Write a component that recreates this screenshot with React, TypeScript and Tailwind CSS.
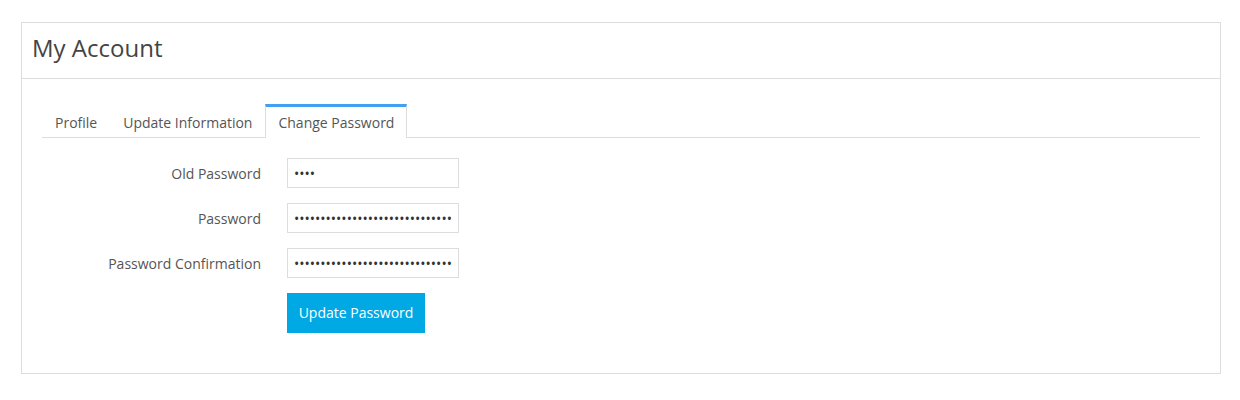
export default function App() {
  const tabs = ["Profile", "Update Information", "Change Password"];
  const active = "Change Password";

  const fields = [
    { label: "Old Password", value: "abcd" },
    { label: "Password", value: "abcdefghijklmnopqrstuvwxyzabcd" },
    { label: "Password Confirmation", value: "abcdefghijklmnopqrstuvwxyzabcd" },
  ];

  return (
    <div className="min-h-[400px] bg-white pl-[21px] pt-[22px] font-['Open_Sans',sans-serif] text-[#555]">
      <div className="h-[352px] w-[1200px] border border-[#ddd]">
        {/* header */}
        <div className="flex h-[56px] items-center border-b border-[#ddd] px-[10px] pb-[6px]">
          <h1 className="text-[24px] leading-[32px] text-[#444]">My Account</h1>
        </div>

        <div className="px-5 pt-[25px]">
          {/* tabs */}
          <div className="flex border-b border-[#ddd]">
            {tabs.map((t) =>
              t === active ? (
                <div
                  key={t}
                  className="-mb-px border-x border-t-[3px] border-x-[#ddd] border-t-[#42a0f0] bg-white px-3 pb-[4px] pt-[6px] text-[14px] leading-[20px] text-[#555]"
                >
                  {t}
                </div>
              ) : (
                <div
                  key={t}
                  className="border-x border-t-[3px] border-transparent px-3 pb-[4px] pt-[6px] text-[14px] leading-[20px] text-[#555]"
                >
                  {t}
                </div>
              )
            )}
          </div>

          {/* form */}
          <div className="flex flex-col gap-[15px] pt-5">
            {fields.map((f) => (
              <div key={f.label} className="flex items-center">
                <label className="w-[219px] text-right text-[14px] text-[#555]">{f.label}</label>
                <input
                  type="password"
                  readOnly
                  value={f.value}
                  className="ml-[26px] h-[30px] w-[172px] border border-[#ddd] bg-white px-[6px] text-[14px] text-[#333] outline-none"
                />
              </div>
            ))}
            <div className="flex">
              <button className="ml-[245px] h-[40px] w-[138px] bg-[#00a8e4] pb-[2px] text-[14px] text-white">
                Update Password
              </button>
            </div>
          </div>
        </div>
      </div>
    </div>
  );
}
